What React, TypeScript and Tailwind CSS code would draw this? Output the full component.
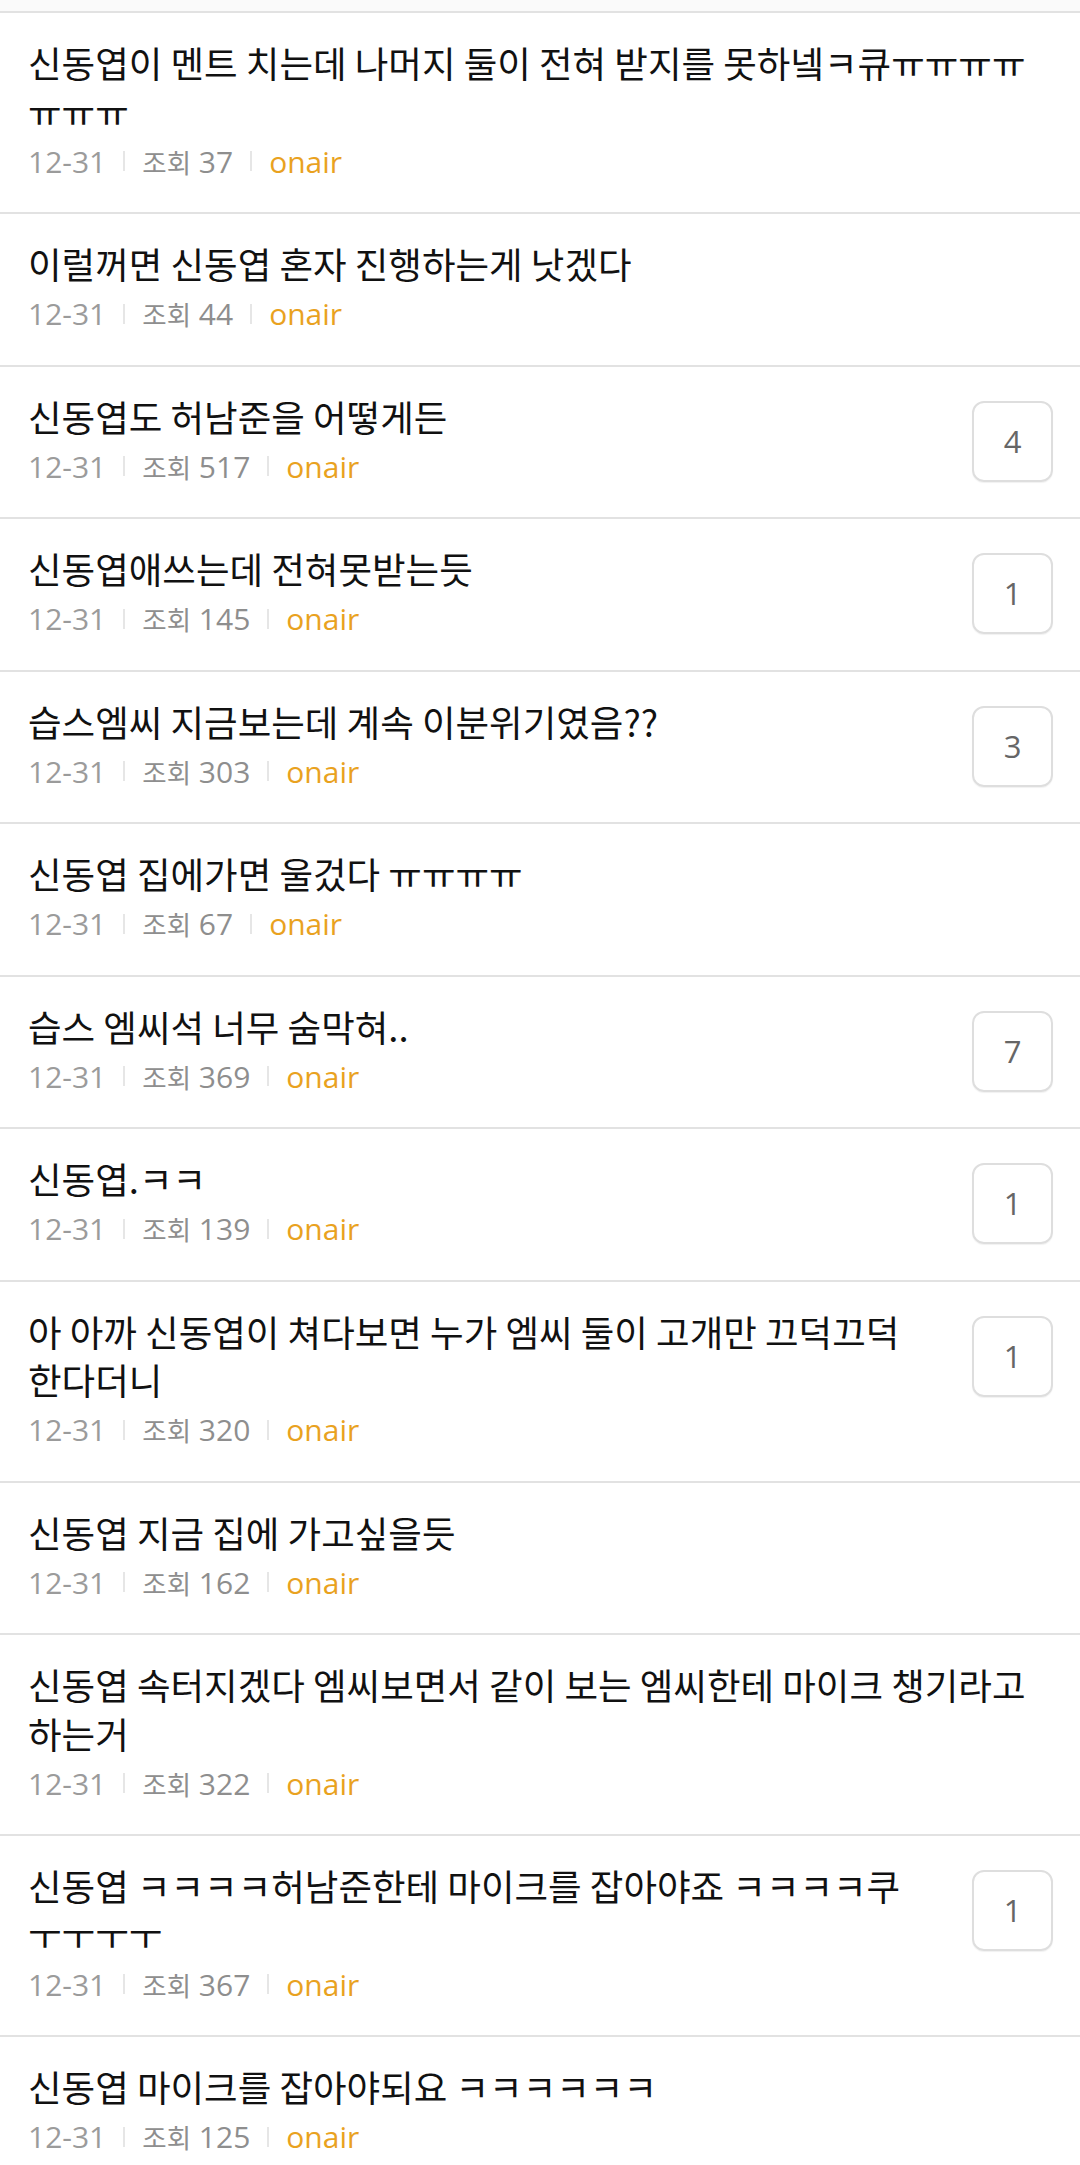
import React from "react";

type Post = { lines: string[]; views: number; comments?: number };

const posts: Post[] = [
  { lines: ["신동엽이 멘트 치는데 나머지 둘이 전혀 받지를 못하넼ㅋ큐ㅠㅠㅠㅠ", "ㅠㅠㅠ"], views: 37 },
  { lines: ["이럴꺼면 신동엽 혼자 진행하는게 낫겠다"], views: 44 },
  { lines: ["신동엽도 허남준을 어떻게든"], views: 517, comments: 4 },
  { lines: ["신동엽애쓰는데 전혀못받는듯"], views: 145, comments: 1 },
  { lines: ["습스엠씨 지금보는데 계속 이분위기였음??"], views: 303, comments: 3 },
  { lines: ["신동엽 집에가면 울겄다 ㅠㅠㅠㅠ"], views: 67 },
  { lines: ["습스 엠씨석 너무 숨막혀.."], views: 369, comments: 7 },
  { lines: ["신동엽.ㅋㅋ"], views: 139, comments: 1 },
  { lines: ["아 아까 신동엽이 쳐다보면 누가 엠씨 둘이 고개만 끄덕끄덕", "한다더니"], views: 320, comments: 1 },
  { lines: ["신동엽 지금 집에 가고싶을듯"], views: 162 },
  { lines: ["신동엽 속터지겠다 엠씨보면서 같이 보는 엠씨한테 마이크 챙기라고", "하는거"], views: 322 },
  { lines: ["신동엽 ㅋㅋㅋㅋ허남준한테 마이크를 잡아야죠 ㅋㅋㅋㅋ쿠", "ㅜㅜㅜㅜ"], views: 367, comments: 1 },
  { lines: ["신동엽 마이크를 잡아야되요 ㅋㅋㅋㅋㅋㅋ"], views: 125 },
];

function Row({ post }: { post: Post }) {
  return (
    <div className="flex items-start border-t-2 border-[#e2e2e2] bg-white pl-[28px] pr-[27px] pt-[26px] pb-[26px]">
      <div className="flex-1 min-w-0">
        <div className="text-[36.5px] leading-[48.5px] text-[#111111] font-['Noto_Sans_CJK_KR',sans-serif]">
          {post.lines.map((l, i) => (
            <div key={i} className="whitespace-nowrap">
              {l}
            </div>
          ))}
        </div>
        <div className="flex items-center h-[50px] text-[30px] font-['Open_Sans','Noto_Sans_CJK_KR',sans-serif]">
          <span className="text-[#9b9b9b]">12-31</span>
          <span className="mx-[17px] h-[20px] w-[2px] bg-[#e6e6e6]" />
          <span className="text-[#8e8e8e]">
            <span className="text-[26.5px] font-['Noto_Sans_CJK_KR',sans-serif]">조회</span> {post.views}
          </span>
          <span className="mx-[17px] h-[20px] w-[2px] bg-[#e6e6e6]" />
          <span className="text-[#e9a21f]">onair</span>
        </div>
      </div>
      {post.comments !== undefined && (
        <div className="mt-[8px] ml-4 flex h-[81px] w-[81px] shrink-0 items-center justify-center rounded-[12px] border-2 border-[#dedede] shadow-[0_1px_1px_rgba(0,0,0,0.06)] text-[31px] text-[#666666] font-['Open_Sans',sans-serif]">
          {post.comments}
        </div>
      )}
    </div>
  );
}

export default function App() {
  return (
    <div className="w-[1080px] min-h-[2165px] bg-white">
      <div className="h-[11px] bg-[#fafafa]" />
      {posts.map((p, i) => (
        <Row key={i} post={p} />
      ))}
    </div>
  );
}
